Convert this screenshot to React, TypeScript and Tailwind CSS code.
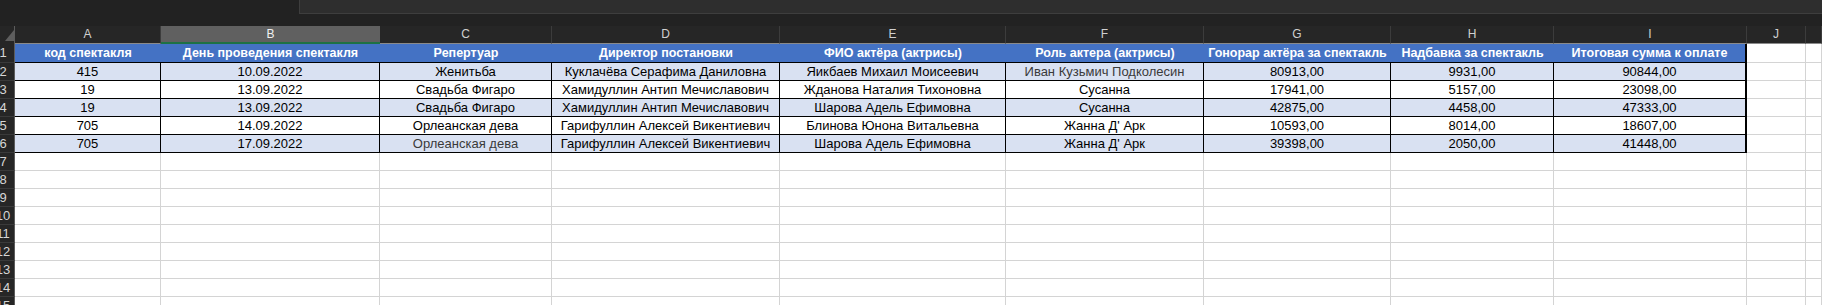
import React from "react";

const GRID =
  "grid grid-cols-[15px_146px_219px_172px_228px_226px_198px_187px_163px_193px_59px_1fr]";

const letters = ["A", "B", "C", "D", "E", "F", "G", "H", "I", "J", ""];

const headers = [
  "код спектакля",
  "День проведения спектакля",
  "Репертуар",
  "Директор постановки",
  "ФИО актёра (актрисы)",
  "Роль актера (актрисы)",
  "Гонорар актёра за спектакль",
  "Надбавка за спектакль",
  "Итоговая сумма к оплате",
];

// [text, muted?]
type Cell = [string, boolean?];

const rows: Cell[][] = [
  [["415"], ["10.09.2022"], ["Женитьба"], ["Куклачёва Серафима Даниловна"], ["Яикбаев Михаил Моисеевич"], ["Иван Кузьмич Подколесин", true], ["80913,00"], ["9931,00"], ["90844,00"]],
  [["19"], ["13.09.2022"], ["Свадьба Фигаро"], ["Хамидуллин Антип Мечиславович"], ["Жданова Наталия Тихоновна"], ["Сусанна"], ["17941,00"], ["5157,00"], ["23098,00"]],
  [["19"], ["13.09.2022"], ["Свадьба Фигаро"], ["Хамидуллин Антип Мечиславович"], ["Шарова Адель Ефимовна"], ["Сусанна"], ["42875,00"], ["4458,00"], ["47333,00"]],
  [["705"], ["14.09.2022"], ["Орлеанская дева"], ["Гарифуллин Алексей Викентиевич"], ["Блинова Юнона Витальевна"], ["Жанна Д' Арк"], ["10593,00"], ["8014,00"], ["18607,00"]],
  [["705"], ["17.09.2022"], ["Орлеанская дева", true], ["Гарифуллин Алексей Викентиевич"], ["Шарова Адель Ефимовна"], ["Жанна Д' Арк"], ["39398,00"], ["2050,00"], ["41448,00"]],
];

const RowNum = ({ n }: { n: number }) => (
  <div className="h-full overflow-hidden border-r border-r-[#5c5c5c] border-b border-b-[#3a3a3a] bg-[#262626]">
    <div className="w-[40px] -ml-[17px] text-center text-[13px] leading-[17px] text-[#d6d6d6]">
      {n}
    </div>
  </div>
);

// fills the rest of a 12-column row with blank grid cells
const EmptyCells = ({ count }: { count: number }) => (
  <>
    {Array.from({ length: count }).map((_, i) => (
      <div key={i} className="border-r border-b border-[#d4d4d4] bg-white" />
    ))}
  </>
);

export default function App() {
  return (
    <div className="w-[1822px] h-[305px] overflow-hidden bg-[#222222] font-['Liberation_Sans',Arial,sans-serif]">
      {/* top ribbon edge */}
      <div className="flex h-[26px]">
        <div className="w-[299px]" />
        <div className="flex-1 h-[14px] bg-[#2e2e2e] border-l border-b border-[#3e3e3e]" />
      </div>

      {/* column letters */}
      <div className={`${GRID} h-[18px] bg-[#262626]`}>
        <div className="relative border-r border-[#5c5c5c]">
          <svg className="absolute left-[5px] top-[4px]" width="9" height="11" viewBox="0 0 9 11">
            <polygon points="9,0 9,11 0,11" fill="#5e5e5e" />
          </svg>
        </div>
        {letters.map((l, i) => (
          <div
            key={i}
            className={
              l === "B"
                ? "bg-[#606060] border-b-2 border-[#1e7145] text-center text-[12px] leading-[16px] text-[#f0f0f0]"
                : "border-r border-[#3c3c3c] border-b border-b-[#8a8a8a] text-center text-[12px] leading-[17px] text-[#d0d0d0]"
            }
          >
            {l}
          </div>
        ))}
      </div>

      {/* row 1: table header */}
      <div className={`${GRID} h-[19px]`}>
        <RowNum n={1} />
        {headers.map((h, i) => (
          <div
            key={i}
            className={
              i === 8
                ? "bg-[#4472c4] border-b border-black border-r-2 border-r-black text-center text-[12.5px] font-bold leading-[18px] text-white whitespace-nowrap overflow-hidden"
                : "bg-[#4472c4] border-b border-black text-center text-[12.5px] font-bold leading-[18px] text-white whitespace-nowrap overflow-hidden"
            }
          >
            {h}
          </div>
        ))}
        <EmptyCells count={2} />
      </div>

      {/* rows 2-6: data */}
      {rows.map((r, ri) => (
        <div key={ri} className={`${GRID} h-[18px]`}>
          <RowNum n={ri + 2} />
          {r.map(([t, muted], ci) => (
            <div
              key={ci}
              className={[
                ri % 2 === 0 ? "bg-[#d9e1f2]" : "bg-white",
                ci === 8 ? "border-r-2" : "border-r",
                "border-b border-black text-center text-[13px] leading-[17px] whitespace-nowrap overflow-hidden",
                muted ? "text-[#3a3a3a]" : "text-black",
              ].join(" ")}
            >
              {t}
            </div>
          ))}
          <EmptyCells count={2} />
        </div>
      ))}

      {/* empty rows */}
      {Array.from({ length: 9 }).map((_, i) => (
        <div key={i} className={`${GRID} h-[18px]`}>
          <RowNum n={i + 7} />
          <EmptyCells count={11} />
        </div>
      ))}
    </div>
  );
}
